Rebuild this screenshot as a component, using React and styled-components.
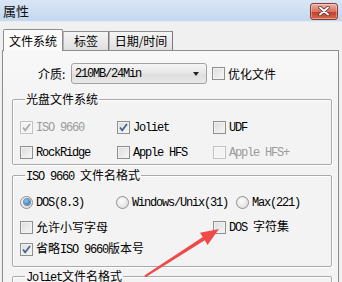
import React from "react";
import styled, { createGlobalStyle, css } from "styled-components";

const Global = createGlobalStyle`
  html, body { margin: 0; padding: 0; }
  body {
    width: 342px; height: 282px; overflow: hidden;
    background: #f0f0f0;
    font-family: "Noto Sans CJK SC", "Noto Sans", sans-serif;
    font-size: 12px; color: #000;
  }
`;

const Window = styled.div`
  position: relative;
  width: 342px; height: 282px; overflow: hidden;
  display: flex; flex-direction: column;
  background: #f0f0f0;
`;

const TitleBar = styled.div`
  height: 21px; flex: none;
  display: flex; align-items: center; justify-content: space-between;
  padding: 0 4px 0 3px;
  background: linear-gradient(#d9e6f5, #c4d7ee);
  border-bottom: 1px solid #e4ecf6;
`;

const Title = styled.span`
  font-size: 13px; line-height: 16px; color: #111;
`;

const CloseButton = styled.div`
  width: 26px; height: 15px; margin-top: 1px;
  border: 1px solid #8a3a30; border-radius: 3px;
  background: linear-gradient(#eab0a4, #d8725f 50%, #c2402e 55%, #d66a52);
  display: flex; align-items: center; justify-content: center;
  box-shadow: inset 0 0 0 1px rgba(255,255,255,0.35);
`;

const Body = styled.div`
  flex: 1; display: flex; flex-direction: column;
  padding: 0 3px 0 2px;
`;

const TabStrip = styled.div`
  height: 28px; flex: none;
  display: flex; align-items: flex-end;
  padding-left: 1px;
`;

const Tab = styled.div`
  width: ${p => p.$w}px;
  box-sizing: border-box;
  display: flex; align-items: center; justify-content: center;
  border: 1px solid #8d8d8d; border-bottom: none;
  font-size: 12px; line-height: 14px;
  ${p => p.$active ? css`
    height: 22px; margin-bottom: -1px; position: relative; z-index: 1;
    background: #fbfbfb;
    border-radius: 2px 2px 0 0;
  ` : css`
    height: 19px;
    background: linear-gradient(#f4f4f4, #e0e0e0);
    border-left-color: #b5b5b5;
    border-right-color: #7a7a7a;
  `}
`;

const Panel = styled.div`
  flex: 1;
  border: 1px solid #8d8d8d; border-bottom: none;
  background: linear-gradient(#f8f8f8, #f3f3f3 60px);
  padding-top: 12px;
  display: flex; flex-direction: column;
`;

const MediaRow = styled.div`
  display: flex; align-items: center;
  height: 21px;
  padding-left: 35px;
`;

const MediaLabel = styled.span`
  width: 33px; line-height: 16px;
`;

const Combo = styled.div`
  width: 136px; height: 21px; box-sizing: border-box;
  border: 1px solid #a2a2a2; border-radius: 3px;
  background: linear-gradient(#f5f5f5, #e6e6e6 50%, #dcdcdc 51%, #e9e9e9);
  display: flex; align-items: center; justify-content: space-between;
  padding: 0 7px 0 3px;
  margin-right: 5px;
`;

const Lat = styled.span`
  font-family: "Liberation Mono", "DejaVu Sans Mono", monospace;
  font-size: 12px; letter-spacing: -1.2px;
  color: inherit;
`;

const Caret = styled.span`
  width: 0; height: 0;
  border-left: 3.5px solid transparent; border-right: 3.5px solid transparent;
  border-top: 4px solid #222;
`;

const Group = styled.fieldset`
  margin: ${p => p.$mt}px 6px 0 9px;
  padding: ${p => p.$pt}px 0 ${p => p.$pb}px 7px;
  min-width: 0;
  border: 1px solid #a9a9a9;
  border-radius: 2px;
  box-shadow: 1px 1px 0 #fff, inset 1px 1px 0 #fff;
`;

const Legend = styled.legend`
  margin-left: 5px; padding: 0 1px;
  font-size: 12px; line-height: 14px; height: 14px;
`;

const Row = styled.div`
  display: flex; align-items: center;
  height: 16px;
  margin-top: ${p => p.$mt || 0}px;
`;

const Item = styled.div`
  display: flex; align-items: center; gap: 3px;
  ${p => p.$w ? css`width: ${p.$w}px; flex: none;` : css`flex: 1;`}
  color: ${p => p.$disabled ? "#9a9a9a" : "#000"};
  line-height: 16px; white-space: nowrap;
`;

const Box = styled.span`
  width: 13px; height: 13px; box-sizing: border-box; flex: none;
  border: 1px solid ${p => p.$disabled ? "#c2c2c2" : "#8e8f8f"};
  background: ${p => p.$disabled
    ? "#f3f3f3"
    : "linear-gradient(135deg, #dcdcdc, #f6f6f6)"};
  box-shadow: inset 0 0 0 1px ${p => p.$disabled ? "#f8f8f8" : "#f2f2f2"};
  display: flex; align-items: center; justify-content: center;
`;

const Radio = styled.span`
  width: 13px; height: 13px; box-sizing: border-box; flex: none;
  border-radius: 50%;
  border: 1px solid #8e8f8f;
  background: radial-gradient(circle at 40% 35%, #fdfdfd, #d8d8d8);
  display: flex; align-items: center; justify-content: center;
`;

const Dot = styled.span`
  width: 6px; height: 6px; border-radius: 50%;
  background: radial-gradient(circle at 40% 35%, #8ec9f0, #1b5fa5);
  box-shadow: 0 0 0 1px #6d8fb2;
`;

const Arrow = styled.svg`
  position: absolute; left: 0; top: 0;
  pointer-events: none;
`;

const Check = ({ disabled }) => (
  <svg width="11" height="11" viewBox="0 0 11 11">
    <path d="M2 5.5 L4.2 8.3 L9 2" fill="none"
      stroke={disabled ? "#a8a8a8" : "#4b5f8c"} strokeWidth="1.7" />
  </svg>
);

const CheckItem = ({ w, checked, disabled, children }) => (
  <Item $w={w} $disabled={disabled}>
    <Box $disabled={disabled}>{checked && <Check disabled={disabled} />}</Box>
    <span>{children}</span>
  </Item>
);

const RadioItem = ({ w, checked, children }) => (
  <Item $w={w}>
    <Radio>{checked && <Dot />}</Radio>
    <span>{children}</span>
  </Item>
);

export default function App() {
  return (
    <>
      <Global />
      <Window>
        <TitleBar>
          <Title>属性</Title>
          <CloseButton>
            <svg width="12" height="10" viewBox="0 0 12 10">
              <path d="M2 1.5 L10 8.5 M10 1.5 L2 8.5" stroke="#5a2018" strokeWidth="3.4" strokeLinecap="round" />
              <path d="M2 1.5 L10 8.5 M10 1.5 L2 8.5" stroke="#fff" strokeWidth="2" strokeLinecap="round" />
            </svg>
          </CloseButton>
        </TitleBar>
        <Body>
          <TabStrip>
            <Tab $active $w={60}>文件系统</Tab>
            <Tab $w={46}>标签</Tab>
            <Tab $w={64}>日期/时间</Tab>
          </TabStrip>
          <Panel>
            <MediaRow>
              <MediaLabel>介质:</MediaLabel>
              <Combo>
                <Lat>210MB/24Min</Lat>
                <Caret />
              </Combo>
              <CheckItem>优化文件</CheckItem>
            </MediaRow>

            <Group $mt={8} $pt={13} $pb={4}>
              <Legend>光盘文件系统</Legend>
              <Row>
                <CheckItem w={97} checked disabled><Lat>ISO 9660</Lat></CheckItem>
                <CheckItem w={96} checked><Lat>Joliet</Lat></CheckItem>
                <CheckItem><Lat>UDF</Lat></CheckItem>
              </Row>
              <Row $mt={9}>
                <CheckItem w={97}><Lat>RockRidge</Lat></CheckItem>
                <CheckItem w={96}><Lat>Apple HFS</Lat></CheckItem>
                <CheckItem disabled><Lat>Apple HFS+</Lat></CheckItem>
              </Row>
            </Group>

            <Group $mt={3} $pt={12} $pb={9}>
              <Legend><Lat>ISO 9660 </Lat>文件名格式</Legend>
              <Row>
                <RadioItem w={96} checked><Lat>DOS(8.3)</Lat></RadioItem>
                <RadioItem w={120}><Lat>Windows/Unix(31)</Lat></RadioItem>
                <RadioItem><Lat>Max(221)</Lat></RadioItem>
              </Row>
              <Row $mt={9}>
                <CheckItem w={193}>允许小写字母</CheckItem>
                <CheckItem><Lat>DOS </Lat>字符集</CheckItem>
              </Row>
              <Row $mt={6}>
                <CheckItem checked>省略<Lat>ISO 9660</Lat>版本号</CheckItem>
              </Row>
            </Group>

            <Group $mt={2} $pt={12} $pb={9}>
              <Legend><Lat>Joliet</Lat>文件名格式</Legend>
              <Row />
            </Group>
          </Panel>
        </Body>
        <Arrow width="342" height="282" viewBox="0 0 342 282">
          <polygon
            points="219,229 207.5,245 204.8,240.2 145.6,277.2 144.4,275.5 202.8,236.9 200,232.7"
            fill="#ee4a4a" />
        </Arrow>
      </Window>
    </>
  );
}
